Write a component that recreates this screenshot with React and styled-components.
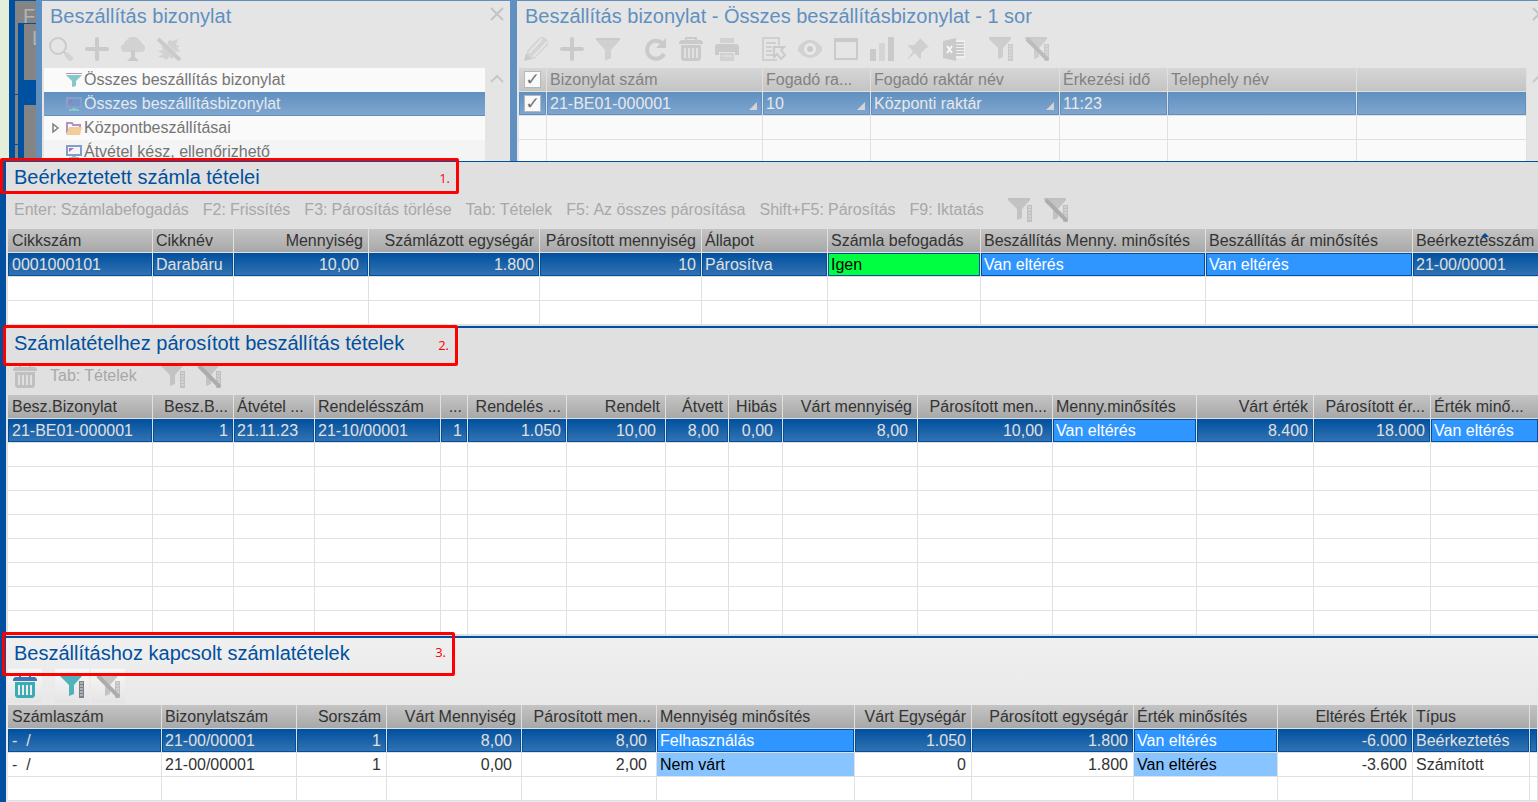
import React from 'react';
import styled, { createGlobalStyle } from 'styled-components';

const GlobalStyle = createGlobalStyle`
  * { box-sizing: border-box; }
  body {
    margin: 0;
    background: #e0e0e0;
    font-family: "Liberation Sans", Arial, sans-serif;
    font-size: 16px;
    overflow: hidden;
  }
  button { font: inherit; }
`;

const Desktop = styled.div`
  display: flex;
  height: 161px;
  overflow: hidden;
  background: #e3efda;
`;

const BackWindow = styled.div`
  width: 27px;
  margin-left: 9px;
  flex: none;
  display: flex;
  flex-direction: column;
  overflow: hidden;
  border-left: 6px solid #0050a0;
  border-top: 1px solid #0050a0;
  background: #848484;
  color: #b4b4b4;
  font-size: 20px;
`;

const BackTitle = styled.div`
  height: 22px;
  line-height: 30px;
  padding-left: 8px;
  white-space: nowrap;
  overflow: hidden;
`;

const BackBody = styled.div`
  flex: 1;
  display: flex;
`;

const BackEdge = styled.div`
  width: 3px;
  display: grid;
  grid-template-rows: 71px 49px 1fr;
  gap: 1px;
  background: #0050a0;

  span { background: #848484; }
`;

const BackInner = styled.div`
  flex: 1;
  display: grid;
  grid-template-rows: 56px 1fr;
  gap: 25px;
  background: #0050a0;
  padding: 1px 0 0 6px;

  span {
    background: #848484;
    padding-left: 8px;
    line-height: 28px;
    overflow: hidden;
  }
`;

const Pane = styled.section`
  display: flex;
  flex-direction: column;
  min-width: 0;
  flex: ${(p) => (p.$grow ? '1' : 'none')};
  width: ${(p) => (p.$grow ? 'auto' : '474px')};
  border-top: 1px solid #6090c0;
  border-left: ${(p) => (p.$grow ? '7px' : '6px')} solid #6090c0;
  padding-left: 2px;
  background: #e5e5e5;
`;

const PaneHead = styled.div`
  display: flex;
  justify-content: space-between;
`;

const PaneBody = styled.div`
  display: flex;
  flex: 1;
  min-height: 0;
`;

const Gutter = styled.div`
  width: ${(p) => p.$width}px;
  flex: none;
  padding: ${(p) => p.$top}px 0 0 5px;
  overflow: hidden;
`;

const IconButton = styled.button`
  border: 0;
  padding: 0;
  background: none;
  display: block;
  height: 14px;
`;

const Title = styled.h2`
  margin: 0;
  padding-left: 6px;
  height: 31px;
  line-height: 30px;
  font-size: 20px;
  font-weight: 400;
  white-space: nowrap;
  color: ${(p) => (p.$faded ? '#6090c0' : '#00509f')};
`;

const Toolbar = styled.div`
  display: flex;
  gap: 2px;
  height: 36px;
  padding-bottom: 2px;
`;

const Separator = styled.span`
  width: 9px;
`;

const Tool = styled.button`
  width: 34px;
  height: 34px;
  padding: 5px;
  border: 0;
  color: #c0c0c0;
  background: ${(p) => (p.$raised ? 'linear-gradient(#f8f8f8, #e4e4e4)' : 'none')};
  opacity: ${(p) => (p.$dim ? 0.7 : 1)};

  svg { display: block; }
`;

const TextTool = styled.button`
  height: 34px;
  padding: 0 6px;
  border: 0;
  background: none;
  color: #a8a8a8;
  white-space: nowrap;
  display: flex;
  align-items: center;
  gap: 4px;
`;

const Tree = styled.ul`
  flex: 1;
  margin: 0;
  padding: 0;
  list-style: none;
  overflow: hidden;
`;

const TreeItem = styled.li`
  display: flex;
  align-items: center;
  height: 24px;
  padding-left: 8px;
  color: ${(p) => (p.$selected ? '#e3e9f0' : '#757575')};
  background: ${(p) => (p.$selected ? 'linear-gradient(#6090c0, #80a6cf)' : p.$alt ? '#f4f4f4' : '#fafafa')};
  border-bottom: ${(p) => (p.$selected ? '1px solid #6090c0' : '0')};
  white-space: nowrap;

  svg { flex: none; margin-right: 2px; }
`;

const TreeArrow = styled.span`
  width: 14px;
  display: flex;
`;

const Section = styled.section`
  position: relative;
  border-left: 6px solid #00509f;
  border-top: ${(p) => p.$line}px solid #00509f;
  padding: 0 0 1px 2px;
  background: ${(p) => (p.$active ? 'linear-gradient(#f0f0f0, #e8e8e8 67px)' : '#e0e0e0')};
`;

const Callout = styled.div`
  position: absolute;
  z-index: 2;
  top: ${(p) => p.$top}px;
  left: ${(p) => p.$left}px;
  width: ${(p) => p.$width}px;
  height: ${(p) => p.$height}px;
  border: 3px solid #ff0000;
  border-radius: 2px;
  color: #ff0000;
  font: 13px/18px "Open Sans", "Noto Sans", sans-serif;
  text-align: right;
  padding: 8px 6px 0 0;
  pointer-events: none;
`;

const TableWrap = styled.div`
  flex: 1;
  min-width: 0;
  overflow: hidden;
`;

const Table = styled.table`
  table-layout: fixed;
  width: 100%;
  border-collapse: separate;
  border-spacing: 0;
`;

const HeadCell = styled.th`
  position: relative;
  height: 24px;
  padding: 0 5px 0 3px;
  line-height: 23px;
  font-weight: 400;
  text-align: ${(p) => p.$align || 'left'};
  white-space: nowrap;
  overflow: hidden;
  color: ${(p) => (p.$faded ? '#828282' : '#333333')};
  background: ${(p) => (p.$faded ? 'linear-gradient(#d6d6d6, #c4c4c4)' : 'linear-gradient(#c4c4c4, #a8a8a8)')} padding-box;
  border-right: 1px solid #e0e0e0;
  border-bottom: 1px solid #e0e0e0;

  &:first-child { padding-left: 4px; }
`;

const fills = {
  plain: '#ffffff',
  selected: 'linear-gradient(#00509f, #3474b3)',
  fadedSelected: 'linear-gradient(#6090c0, #80a6cf)',
  faded: '#fafafa',
  green: '#00ff40',
  blue: '#3096ff',
  lightBlue: '#88c4ff',
};

const inks = {
  plain: '#333333',
  selected: '#e0e0e0',
  fadedSelected: '#e8e8e8',
  faded: '#757575',
  green: '#000000',
  blue: '#ffffff',
  lightBlue: '#000000',
};

const Cell = styled.td`
  position: relative;
  height: 24px;
  padding: 0 ${(p) => (p.$inset ? 9 : 5)}px 0 3px;
  line-height: 23px;
  text-align: ${(p) => p.$align || 'left'};
  white-space: pre;
  overflow: hidden;
  color: ${(p) => inks[p.$fill]};
  background: ${(p) => fills[p.$fill]} padding-box;
  box-shadow: ${(p) => (p.$outline ? `inset 0 0 0 1px ${p.$outline}` : 'none')};
  border-right: 1px solid #e0e0e0;
  border-bottom: 1px solid #e0e0e0;

  &:first-child { padding-left: 4px; }
`;

const Corner = styled.span`
  position: absolute;
  right: 5px;
  bottom: 5px;
  border-left: 8px solid transparent;
  border-bottom: 8px solid #d4d4d4;
`;

const SortMark = styled.span`
  position: absolute;
  top: 4px;
  left: 50%;
  margin-left: -4px;
  border: 4px solid transparent;
  border-top: 0;
  border-bottom-color: #00509f;
`;

const Check = styled.input`
  appearance: none;
  display: block;
  width: 17px;
  height: 17px;
  margin: 0 0 0 1px;
  border: 1px solid #b8b8b8;
  background: #fafafa;
  overflow: hidden;

  &:checked::after {
    content: "✓";
    display: block;
    text-align: center;
    font: 17px/15px "DejaVu Sans", sans-serif;
    color: #707070;
  }
`;

const Svg = ({ size = 24, children }) => (
  <svg width={size} height={size} viewBox={`0 0 ${size} ${size}`} fill="currentColor" aria-hidden="true">
    {children}
  </svg>
);

const SearchIcon = () => (
  <Svg>
    <circle cx="9" cy="9" r="8" fill="none" stroke="currentColor" strokeWidth="2" />
    <path d="M14 14l3 3" stroke="currentColor" strokeWidth="2" />
    <path d="M17 17l6 6" stroke="currentColor" strokeWidth="5" opacity="0.7" />
  </Svg>
);

const PlusIcon = () => (
  <Svg><path d="M12 2v20M2 12h20" stroke="currentColor" strokeWidth="4" strokeLinecap="round" /></Svg>
);

const TreeIcon = () => (
  <Svg>
    <path opacity="0.75" d="M4 15a4 4 0 0 1-4-4 4 4 0 0 1 3-4 5 5 0 0 1 3-4 7 7 0 0 1 12 0 5 5 0 0 1 3 4 4 4 0 0 1 3 4 4 4 0 0 1-4 4z" />
    <path d="M10 13h4v7l4 4H6l4-4z" />
  </Svg>
);

const UnpinIcon = () => (
  <Svg>
    <path opacity="0.7" d="M1 20l5-3-5-3 5-1-2-3h5l8 8-1 4-4-2-3 3-2-2zM12 3l3 1 6-2-2 6 4 1-3 2 3 3-5 1-8-8z" />
    <path d="M1 2l22 21" stroke="currentColor" strokeWidth="4" />
  </Svg>
);

const PencilIcon = () => (
  <Svg>
    <path opacity="0.65" d="M3 14L14 2l3-2h3l4 4v4L10 22H8l-5-5z" />
    <path d="M5 16L18 2M9 20L23 5" stroke="#e5e5e5" strokeWidth="2" />
    <path d="M0 24l2-8 6 6z" />
  </Svg>
);

const FunnelIcon = () => (
  <Svg>
    <path d="M0 1h24v2H0z" />
    <path opacity="0.8" d="M0 3h24l-9 10v8l-6 3V13z" />
  </Svg>
);

const RefreshIcon = () => (
  <Svg>
    <path d="M19 6a9 9 0 1 0 2 11" fill="none" stroke="currentColor" strokeWidth="4" />
    <path d="M23 1v10H13z" />
  </Svg>
);

const TrashIcon = ({ lid = 'currentColor', can = 'currentColor', gap = '#e0e0e0' }) => (
  <Svg>
    <path d="M7 3V1h10v2" fill="none" stroke={lid} strokeWidth="2" />
    <path fill={lid} d="M2 3h20l2 2v2H0V5z" />
    <path fill={can} d="M2 8h20v14l-2 2H4l-2-2z" />
    <path d="M6 11v10M10 11v10M14 11v10M18 11v10" stroke={gap} strokeWidth="2" />
  </Svg>
);

const PrintIcon = () => (
  <Svg>
    <path opacity="0.75" d="M5 1h14v5H5z" />
    <path d="M2 7h20l2 2v9h-4v-3H4v3H0V9z" />
    <path opacity="0.75" d="M5 16h14v8H5z" />
    <path d="M7 19h10" stroke="#e5e5e5" />
  </Svg>
);

const ListIcon = () => (
  <Svg>
    <path d="M17 8V1H1v22h14" fill="none" stroke="currentColor" strokeWidth="2" opacity="0.8" />
    <path d="M4 6h10M4 10h6M4 14h6M4 18h8" stroke="currentColor" strokeWidth="2" opacity="0.8" />
    <path d="M12 10h10l-3 3 4 5-4 4-4-5-3 3z" fill="#e5e5e5" stroke="currentColor" strokeWidth="2" />
  </Svg>
);

const EyeIcon = () => (
  <Svg>
    <path opacity="0.75" d="M-1 12C6 0 18 0 25 12 18 24 6 24-1 12z" />
    <circle cx="12" cy="12" r="6" fill="#ebebeb" />
    <circle cx="12" cy="12" r="3" />
  </Svg>
);

const WindowIcon = () => (
  <Svg>
    <path d="M1 2h22v20H1z" fill="none" stroke="currentColor" strokeWidth="2" />
    <path d="M0 1h24v4H0z" />
  </Svg>
);

const ChartIcon = () => (
  <Svg>
    <path d="M0 12h6v12H0zM18 0h6v24h-6z" />
    <path opacity="0.6" d="M9 6h6v18H9z" />
  </Svg>
);

const PinIcon = () => (
  <Svg>
    <path opacity="0.8" d="M14 1l9 9-3 1-5 5v5l-1 1-5-6-8 7 6-9-5-5 1-1h5l5-5z" />
  </Svg>
);

const ExcelIcon = () => (
  <Svg>
    <path d="M12 3h11v18H12z" fill="#f4f4f4" />
    <path d="M14 6h8M14 9h8M14 12h8M14 15h8M14 18h8" stroke="currentColor" strokeWidth="2" />
    <path d="M1 4l13-3v23L1 21z" />
    <path d="M5 9l5 7M10 9l-5 7" stroke="#ffffff" strokeWidth="2" />
  </Svg>
);

const FilterRulerIcon = ({ top = 'currentColor', cone = 'currentColor', ruler = 'currentColor', paper = '#e0e0e0', off }) => (
  <Svg>
    <path fill={top} d="M0 0h22v2H0z" />
    <path fill={cone} opacity="0.9" d="M0 2h22l-8 9v9l-5 2V11z" />
    <path fill={ruler} d="M19 7h5v18h-5z" />
    <path d="M20 9h3M20 12h3M20 15h3M20 18h3M20 21h3" stroke={paper} strokeWidth="1" />
    {off && <path d="M2 2l21 21" stroke="#acacac" strokeWidth="4" />}
  </Svg>
);

const CloseIcon = () => (
  <Svg size={14}><path d="M1 1l12 12M13 1L1 13" stroke="#c4c4c4" strokeWidth="2" /></Svg>
);

const ChevronUpIcon = () => (
  <Svg size={14}><path d="M1 10l6-6 6 6" fill="none" stroke="#c8c8c8" strokeWidth="2" /></Svg>
);

const SmallFunnel = () => (
  <Svg size={16}>
    <path fill="#b58fc6" d="M0 1h16v1H0z" />
    <path fill="#84c8c8" d="M0 3h16l-6 6v5l-4 1V9z" />
  </Svg>
);

const SmallMonitor = ({ frame = '#7f9fca', screen = '#f4f4f8' }) => (
  <Svg size={16}>
    <path d="M1 2h14v9H1z" fill={screen} stroke={frame} strokeWidth="2" />
    <path fill="#b070b8" d="M3 4h5L3 8z" />
    <path fill="#84c8c8" d="M6 12h4v1h3v2H3v-2h3z" />
  </Svg>
);

const SmallFolder = () => (
  <Svg size={16}>
    <path d="M1 13V3h5l1 2h7v2" fill="none" stroke="#b58fc6" strokeWidth="2" />
    <path fill="#efcf97" d="M3 7h13l-2 8H0z" />
  </Svg>
);

const SmallArrow = () => (
  <Svg size={10}><path d="M1 1l5 4-5 4z" fill="none" stroke="#808080" strokeWidth="1.500" /></Svg>
);

const FilterTools = ({ raised, colored, dim }) => (
  <>
    <Tool type="button" aria-label="Szűrés" $raised={raised} $dim={dim}>
      {colored
        ? <FilterRulerIcon top="#3c78b4" cone="#3cacb4" ruler="#808080" paper="#cfe4ff" />
        : <FilterRulerIcon />}
    </Tool>
    <Tool type="button" aria-label="Szűrés törlése" $raised={raised} $dim={dim}><FilterRulerIcon off /></Tool>
  </>
);

const topTools = [
  [['Módosítás', PencilIcon], ['Új', PlusIcon], ['Szűrő', FunnelIcon]],
  [['Frissítés', RefreshIcon], ['Törlés', TrashIcon], ['Nyomtatás', PrintIcon]],
  [['Lista', ListIcon], ['Megtekintés', EyeIcon], ['Ablak', WindowIcon],
    ['Grafikon', ChartIcon], ['Rögzítés', PinIcon], ['Excel', ExcelIcon]],
];

const treeTools = [['Keresés', SearchIcon], ['Új', PlusIcon], ['Fa', TreeIcon], ['Rögzítés feloldása', UnpinIcon]];

const shipmentColumns = [
  { width: 216, label: 'Bizonylat szám' },
  { width: 108, label: 'Fogadó ra...' },
  { width: 189, label: 'Fogadó raktár név' },
  { width: 108, label: 'Érkezési idő' },
  { width: 189, label: 'Telephely név' },
  { label: '' },
];

const shipmentRow = ['21-BE01-000001', '10', 'Központi raktár', '11:23', '', ''];

const invoiceColumns = [
  { width: 145, label: 'Cikkszám' },
  { width: 81, label: 'Cikknév' },
  { width: 135, label: 'Mennyiség', align: 'right', inset: true },
  { width: 171, label: 'Számlázott egységár', align: 'right' },
  { width: 162, label: 'Párosított mennyiség', align: 'right' },
  { width: 126, label: 'Állapot' },
  { width: 153, label: 'Számla befogadás' },
  { width: 225, label: 'Beszállítás Menny. minősítés' },
  { width: 207, label: 'Beszállítás ár minősítés' },
  { width: 144, label: 'Beérkeztésszám', sorted: true },
];

const invoiceRows = [
  {
    selected: true,
    cells: ['0001000101', 'Darabáru', '10,00', '1.800', '10', 'Párosítva', 'Igen', 'Van eltérés', 'Van eltérés', '21-00/00001'],
    fills: { 6: 'green', 7: 'blue', 8: 'blue' },
  },
];

const pairedColumns = [
  { width: 145, label: 'Besz.Bizonylat' },
  { width: 81, label: 'Besz.B...', align: 'right' },
  { width: 81, label: 'Átvétel ...' },
  { width: 126, label: 'Rendelésszám' },
  { width: 27, label: '...', align: 'right' },
  { width: 99, label: 'Rendelés ...', align: 'right' },
  { width: 99, label: 'Rendelt', align: 'right', inset: true },
  { width: 63, label: 'Átvett', align: 'right', inset: true },
  { width: 54, label: 'Hibás', align: 'right', inset: true },
  { width: 135, label: 'Várt mennyiség', align: 'right', inset: true },
  { width: 135, label: 'Párosított men...', align: 'right', inset: true },
  { width: 144, label: 'Menny.minősítés' },
  { width: 117, label: 'Várt érték', align: 'right' },
  { width: 117, label: 'Párosított ér...', align: 'right' },
  { width: 108, label: 'Érték minő...' },
];

const pairedRows = [
  {
    selected: true,
    cells: ['21-BE01-000001', '1', '21.11.23', '21-10/00001', '1', '1.050', '10,00', '8,00', '0,00', '8,00', '10,00', 'Van eltérés', '8.400', '18.000', 'Van eltérés'],
    fills: { 11: 'blue', 14: 'blue' },
  },
];

const linkedColumns = [
  { width: 154, label: 'Számlaszám' },
  { width: 135, label: 'Bizonylatszám' },
  { width: 90, label: 'Sorszám', align: 'right' },
  { width: 135, label: 'Várt Mennyiség', align: 'right', inset: true },
  { width: 135, label: 'Párosított men...', align: 'right', inset: true },
  { width: 198, label: 'Mennyiség minősítés' },
  { width: 117, label: 'Várt Egységár', align: 'right' },
  { width: 162, label: 'Párosított egységár', align: 'right' },
  { width: 144, label: 'Érték minősítés' },
  { width: 135, label: 'Eltérés Érték', align: 'right' },
  { width: 117, label: 'Típus' },
  { label: '' },
];

const linkedRows = [
  {
    selected: true,
    cells: ['-  /', '21-00/00001', '1', '8,00', '8,00', 'Felhasználás', '1.050', '1.800', 'Van eltérés', '-6.000', 'Beérkeztetés', ''],
    fills: { 5: 'blue', 8: 'blue' },
  },
  {
    cells: ['-  /', '21-00/00001', '1', '0,00', '2,00', 'Nem várt', '0', '1.800', 'Van eltérés', '-3.600', 'Számított', ''],
    fills: { 5: 'lightBlue', 8: 'lightBlue' },
  },
];

const Columns = ({ columns }) => (
  columns.map((column, i) => <col key={i} width={column.width} />)
);

const DataGrid = ({ columns, rows, empty }) => {
  const blanks = Array.from({ length: empty }, () => ({ cells: columns.map(() => ''), fills: {} }));
  return (
    <TableWrap>
      <Table>
        <colgroup><Columns columns={columns} /></colgroup>
        <thead>
          <tr>
            {columns.map((column, i) => (
              <HeadCell key={i} $align={column.align}>
                {column.label}
                {column.sorted && <SortMark />}
              </HeadCell>
            ))}
          </tr>
        </thead>
        <tbody>
          {[...rows, ...blanks].map((row, r) => (
            <tr key={r}>
              {row.cells.map((text, i) => (
                <Cell
                  key={i}
                  $align={columns[i].align}
                  $inset={columns[i].inset}
                  $fill={row.fills[i] || (row.selected ? 'selected' : 'plain')}
                  $outline={row.selected && '#00509f'}
                >
                  {text}
                </Cell>
              ))}
            </tr>
          ))}
        </tbody>
      </Table>
    </TableWrap>
  );
};

const ShipmentGrid = () => (
  <TableWrap>
    <Table>
      <colgroup>
        <col width="28" />
        <Columns columns={shipmentColumns} />
      </colgroup>
      <thead>
        <tr>
          <HeadCell $faded><Check type="checkbox" aria-label="Összes kijelölése" defaultChecked /></HeadCell>
          {shipmentColumns.map((column, i) => <HeadCell key={i} $faded>{column.label}</HeadCell>)}
        </tr>
      </thead>
      <tbody>
        <tr>
          <Cell $fill="fadedSelected" $outline="#6090c0">
            <Check type="checkbox" aria-label="Sor kijelölése" defaultChecked />
          </Cell>
          {shipmentRow.map((text, i) => (
            <Cell key={i} $fill="fadedSelected" $outline="#6090c0">
              {text}
              {i < 3 && <Corner />}
            </Cell>
          ))}
        </tr>
        {[0, 1].map((r) => (
          <tr key={r}>
            <Cell $fill="faded" />
            {shipmentColumns.map((column, i) => <Cell key={i} $fill="faded" />)}
          </tr>
        ))}
      </tbody>
    </Table>
  </TableWrap>
);

const hotkeys = [
  ['Enter:', 'Számlabefogadás'],
  ['F2:', 'Frissítés'],
  ['F3:', 'Párosítás törlése'],
  ['Tab:', 'Tételek'],
  ['F5:', 'Az összes párosítása'],
  ['Shift+F5:', 'Párosítás'],
  ['F9:', 'Iktatás'],
];

const Hotkey = ({ keys, label }) => (
  <TextTool type="button">
    <span>{keys}</span>
    <span>{label}</span>
  </TextTool>
);

const App = () => (
  <>
    <GlobalStyle />
    <Desktop>
      <BackWindow>
        <BackTitle>F</BackTitle>
        <BackBody>
          <BackEdge><span /><span /><span /></BackEdge>
          <BackInner><span>L</span><span /></BackInner>
        </BackBody>
      </BackWindow>
      <Pane>
        <PaneHead>
          <Title $faded>Beszállítás bizonylat</Title>
          <Gutter $width={25} $top={6}>
            <IconButton type="button" aria-label="Bezárás"><CloseIcon /></IconButton>
          </Gutter>
        </PaneHead>
        <Toolbar>
          {treeTools.map(([label, Icon]) => (
            <Tool key={label} type="button" aria-label={label} $dim><Icon /></Tool>
          ))}
        </Toolbar>
        <PaneBody>
          <Tree>
            <TreeItem><TreeArrow /><SmallFunnel />Összes beszállítás bizonylat</TreeItem>
            <TreeItem $selected>
              <TreeArrow />
              <SmallMonitor frame="#86a0cc" screen="#7098c8" />
              Összes beszállításbizonylat
            </TreeItem>
            <TreeItem><TreeArrow><SmallArrow /></TreeArrow><SmallFolder />Központbeszállításai</TreeItem>
            <TreeItem $alt><TreeArrow /><SmallMonitor />Átvétel kész, ellenőrizhető</TreeItem>
          </Tree>
          <Gutter $width={25} $top={4}>
            <IconButton type="button" aria-label="Fel"><ChevronUpIcon /></IconButton>
          </Gutter>
        </PaneBody>
      </Pane>
      <Pane $grow>
        <PaneHead>
          <Title $faded>Beszállítás bizonylat - Összes beszállításbizonylat - 1 sor</Title>
          <Gutter $width={11} $top={6}>
            <IconButton type="button" aria-label="Bezárás"><CloseIcon /></IconButton>
          </Gutter>
        </PaneHead>
        <Toolbar>
          {topTools.map((group, g) => (
            <React.Fragment key={g}>
              {group.map(([label, Icon]) => (
                <Tool key={label} type="button" aria-label={label} $dim><Icon /></Tool>
              ))}
              <Separator />
            </React.Fragment>
          ))}
          <FilterTools dim />
        </Toolbar>
        <PaneBody>
          <ShipmentGrid />
          <Gutter $width={11} $top={4}>
            <IconButton type="button" aria-label="Fel"><ChevronUpIcon /></IconButton>
          </Gutter>
        </PaneBody>
      </Pane>
    </Desktop>

    <Section $line={1}>
      <Title>Beérkeztetett számla tételei</Title>
      <Toolbar>
        {hotkeys.map(([keys, label]) => <Hotkey key={keys} keys={keys} label={label} />)}
        <Separator />
        <FilterTools />
      </Toolbar>
      <DataGrid columns={invoiceColumns} rows={invoiceRows} empty={2} />
      <Callout $top={-4} $left={-6} $width={459} $height={36}>1.</Callout>
    </Section>

    <Section $line={2}>
      <Title>Számlatételhez párosított beszállítás tételek</Title>
      <Toolbar>
        <Tool type="button" aria-label="Törlés"><TrashIcon /></Tool>
        <Hotkey keys="Tab:" label="Tételek" />
        <Separator />
        <FilterTools />
      </Toolbar>
      <DataGrid columns={pairedColumns} rows={pairedRows} empty={8} />
      <Callout $top={-3} $left={-3} $width={455} $height={41}>2.</Callout>
    </Section>

    <Section $line={2} $active>
      <Title>Beszállításhoz kapcsolt számlatételek</Title>
      <Toolbar>
        <Tool type="button" aria-label="Törlés" $raised><TrashIcon lid="#3c78b4" can="#3cacb4" gap="#eeeeee" /></Tool>
        <Separator />
        <FilterTools raised colored />
      </Toolbar>
      <DataGrid columns={linkedColumns} rows={linkedRows} empty={1} />
      <Callout $top={-6} $left={-4} $width={453} $height={44}>3.</Callout>
    </Section>
  </>
);

export default App;
